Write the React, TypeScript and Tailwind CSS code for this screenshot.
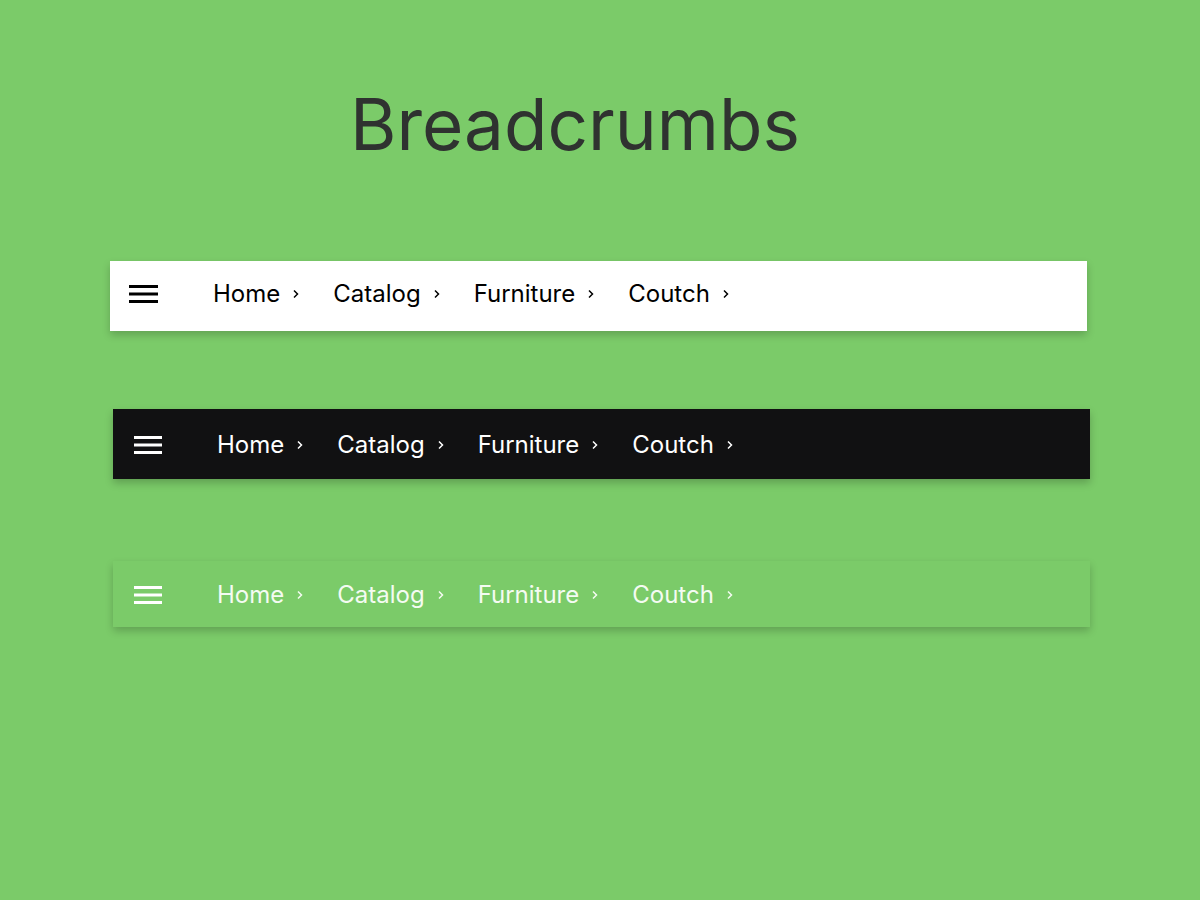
import React from 'react';

type Variant = 'light' | 'dark' | 'green';

const crumbs = ['Home', 'Catalog', 'Furniture', 'Coutch'];

const barStyles: Record<Variant, string> = {
  light: 'bg-white text-black ml-[110px] h-[70px] pb-[4px] shadow-[0_4px_8px_rgba(0,0,0,0.2)]',
  dark: 'bg-[#111112] text-white ml-[113px] h-[70px] pt-[2px] shadow-[0_4px_8px_rgba(0,0,0,0.22)]',
  green: 'bg-[#7bcb69] text-[#f4fbf2] ml-[113px] h-[66px] pt-[1px] shadow-[0_4px_8px_rgba(0,0,0,0.2)]',
};

const Burger = ({ width, dark }: { width: number; dark: boolean }) => (
  <svg width={width} height="20" viewBox={`0 0 ${width} 20`} className={dark ? 'text-black' : 'text-white'}>
    <rect x="0" y="1" width={width} height="3" fill="currentColor" />
    <rect x="0" y="8.5" width={width} height="3" fill="currentColor" />
    <rect x="0" y="16" width={width} height="3" fill="currentColor" />
  </svg>
);

const Chevron = () => (
  <svg width="8" height="10" viewBox="0 0 8 10" className="ml-[12px] mr-[33px]">
    <path d="M2 1.5 L5.5 5 L2 8.5" fill="none" stroke="currentColor" strokeWidth="1.5" />
  </svg>
);

const Breadcrumb = ({ variant }: { variant: Variant }) => (
  <nav className={`flex w-[977px] items-center ${barStyles[variant]}`}>
    <div className={variant === 'light' ? 'ml-[19px] mr-[55px] flex' : 'ml-[21px] mr-[55px] flex'}>
      <Burger width={variant === 'light' ? 29 : 28} dark={variant === 'light'} />
    </div>
    {crumbs.map((c) => (
      <div key={c} className="flex items-center">
        <span className="text-[24px] leading-none">{c}</span>
        <Chevron />
      </div>
    ))}
  </nav>
);

export default function App() {
  return (
    <div className="h-[900px] w-[1200px] bg-[#7bcb69] font-['Inter',sans-serif]">
      <h1 className="pl-[350px] pt-[84px] text-[71px] leading-[80px] text-[#2f3230]">Breadcrumbs</h1>
      <div className="mt-[97px]">
        <Breadcrumb variant="light" />
      </div>
      <div className="mt-[78px]">
        <Breadcrumb variant="dark" />
      </div>
      <div className="mt-[82px]">
        <Breadcrumb variant="green" />
      </div>
    </div>
  );
}
